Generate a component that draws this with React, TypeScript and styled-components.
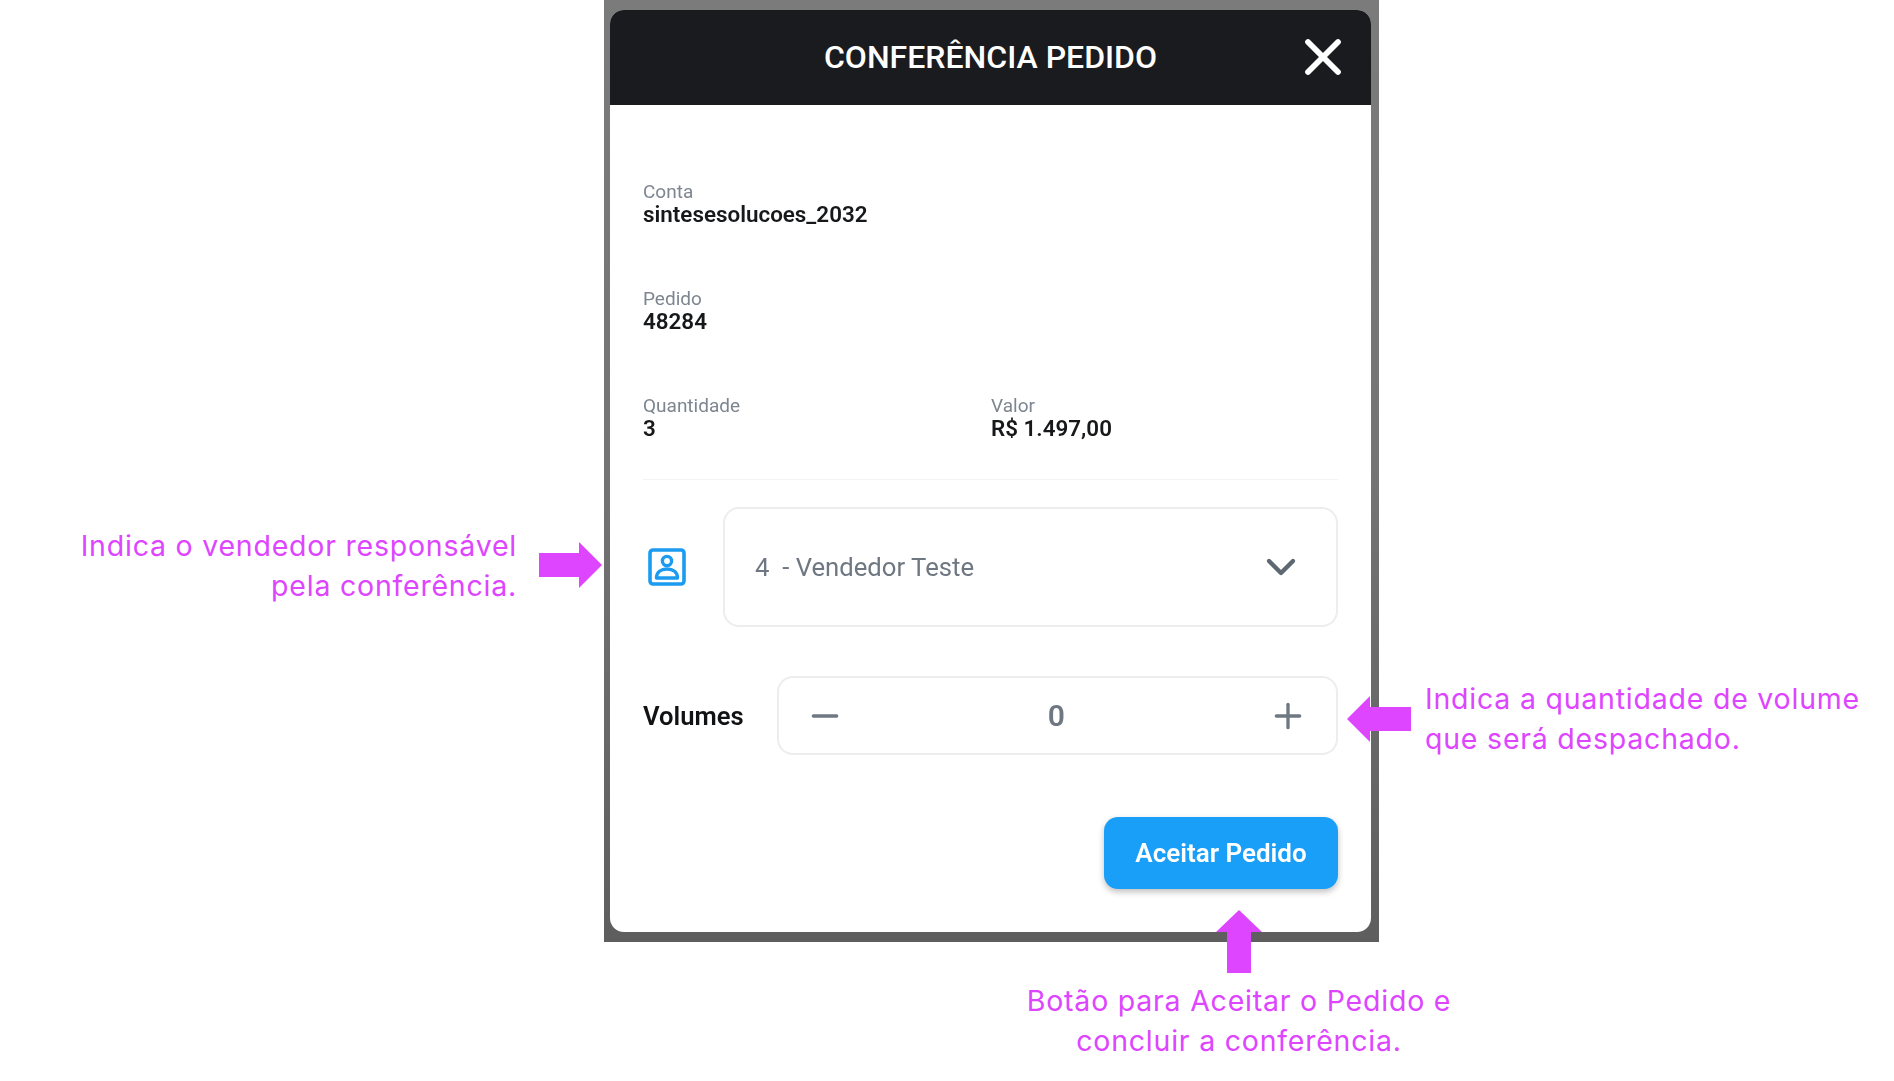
import styled, { createGlobalStyle } from "styled-components";
import { ChevronDown, Minus, Plus, X } from "lucide-react";

const GlobalStyle = createGlobalStyle`
  html, body {
    margin: 0;
    padding: 0;
    background: #fff;
  }
  body {
    font-family: Roboto, "Liberation Sans", sans-serif;
  }
`;

const Page = styled.div`
  width: 1894px;
  height: 1081px;
  overflow: hidden;
  display: grid;
  grid-template-columns: 604px 775px 515px;
  grid-template-rows: 942px 139px;
`;

const LeftNote = styled.div`
  display: flex;
  justify-content: flex-end;
  align-items: flex-start;
  padding-top: 526px;
  padding-right: 2px;
  gap: 22px;
`;

const RightNote = styled.div`
  display: flex;
  align-items: flex-start;
  padding-top: 679px;
`;

const BottomNote = styled.div`
  grid-column: 2;
  display: flex;
  flex-direction: column;
  align-items: center;
  margin-left: 500px;
  width: 270px;
  position: relative;
  z-index: 2;
`;

const NoteText = styled.div<{ align: "left" | "right" | "center" }>`
  font-family: Inter, "Noto Sans", sans-serif;
  font-size: 28.5px;
  letter-spacing: 0.78px;
  line-height: 40px;
  color: #dd45ff;
  text-align: ${(props) => props.align};
  white-space: nowrap;
`;

const ArrowRight = styled.svg`
  flex: none;
  margin-top: 16px;
  position: relative;
  z-index: 2;
`;

const ArrowLeft = styled.svg`
  flex: none;
  margin-left: -32px;
  margin-right: 14px;
  margin-top: 17px;
  position: relative;
  z-index: 2;
`;

const ArrowUp = styled.svg`
  flex: none;
  margin-top: -32px;
  margin-bottom: 8px;
`;

const Frame = styled.div`
  background: linear-gradient(180deg, #7b7b7b 0%, #747474 50%, #5e5e5e 100%);
  padding: 10px 8px 10px 6px;
  box-sizing: border-box;
  height: 942px;
`;

const Card = styled.div`
  height: 100%;
  background: #fff;
  border-radius: 14px;
  overflow: hidden;
  display: flex;
  flex-direction: column;
  filter: blur(0.4px);
`;

const Header = styled.div`
  height: 95px;
  flex: none;
  background: #1a1b1e;
  color: #fff;
  display: flex;
  align-items: center;
  justify-content: center;
  position: relative;
`;

const Title = styled.h1`
  margin: 0 0 2px;
  font-size: 32px;
  font-weight: 500;
`;

const CloseButton = styled.div`
  position: absolute;
  right: 18px;
  top: 17px;
  display: flex;
  color: #fff;
`;

const Body = styled.div`
  flex: 1;
  display: flex;
  flex-direction: column;
  padding: 75px 33px 0;
`;

const InfoRow = styled.div`
  display: grid;
  grid-template-columns: 348px 1fr;
  height: 107px;
`;

const Info = styled.div`
  display: flex;
  flex-direction: column;
`;

const Label = styled.span`
  font-size: 19px;
  line-height: 23px;
  color: #7d8690;
`;

const Value = styled.span`
  font-size: 22.4px;
  line-height: 23px;
  font-weight: 600;
  color: #17181a;
`;

const Divider = styled.div`
  height: 1px;
  background: #f2f3f4;
  margin-top: -22px;
`;

const SellerRow = styled.div`
  display: flex;
  align-items: center;
  margin-top: 27px;
  gap: 37px;
`;

const SellerIcon = styled.svg`
  flex: none;
  margin-left: 5px;
`;

const Select = styled.div`
  flex: 1;
  height: 120px;
  box-sizing: border-box;
  border: 2px solid #eceded;
  border-radius: 16px;
  padding: 0 31px 0 30px;
  display: flex;
  align-items: center;
  justify-content: space-between;
  font-size: 25.7px;
  color: #6f7882;
`;

const VolumesRow = styled.div`
  display: flex;
  align-items: center;
  margin-top: 49px;
  gap: 33px;
`;

const VolumesLabel = styled.span`
  font-size: 25.6px;
  font-weight: 600;
  color: #111214;
`;

const Stepper = styled.div`
  flex: 1;
  height: 79px;
  box-sizing: border-box;
  border: 2px solid #eceded;
  border-radius: 16px;
  padding: 0 28px 0 26px;
  display: flex;
  align-items: center;
  justify-content: space-between;
  color: #6f7882;
`;

const StepperValue = styled.span`
  font-size: 30px;
  font-weight: 600;
  color: #6f7882;
`;

const Actions = styled.div`
  display: flex;
  justify-content: flex-end;
  margin-top: 62px;
`;

const AcceptButton = styled.button`
  width: 234px;
  height: 72px;
  border: 0;
  border-radius: 14px;
  background: #1a9ff8;
  color: #fff;
  font-family: inherit;
  font-size: 26px;
  font-weight: 600;
  box-shadow: 0 3px 6px rgba(0, 0, 0, 0.25);
`;

const ARROW = "#dd45ff";

export default function App() {
  return (
    <Page>
      <GlobalStyle />
      <LeftNote>
        <NoteText align="right">
          Indica o vendedor responsável
          <br />
          pela conferência.
        </NoteText>
        <ArrowRight width="63" height="46" viewBox="0 0 63 46">
          <path d="M0 11H40V0L63 23L40 46V35H0Z" fill={ARROW} />
        </ArrowRight>
      </LeftNote>
      <Frame>
        <Card>
          <Header>
            <Title>CONFERÊNCIA PEDIDO</Title>
            <CloseButton>
              <X size={60} strokeWidth={2.3} />
            </CloseButton>
          </Header>
          <Body>
            <InfoRow>
              <Info>
                <Label>Conta</Label>
                <Value>sintesesolucoes_2032</Value>
              </Info>
            </InfoRow>
            <InfoRow>
              <Info>
                <Label>Pedido</Label>
                <Value>48284</Value>
              </Info>
            </InfoRow>
            <InfoRow>
              <Info>
                <Label>Quantidade</Label>
                <Value>3</Value>
              </Info>
              <Info>
                <Label>Valor</Label>
                <Value>R$ 1.497,00</Value>
              </Info>
            </InfoRow>
            <Divider />
            <SellerRow>
              <SellerIcon width="38" height="38" viewBox="0 0 38 38" fill="none">
                <rect x="2" y="2" width="34" height="34" rx="3" stroke="#1c9cf0" strokeWidth="3.6" />
                <circle cx="19" cy="13" r="4.6" stroke="#1c9cf0" strokeWidth="3.4" />
                <path d="M8.5 30c0-6 4.5-9 10.500-9s10.500 3 10.500 9z" stroke="#1c9cf0" strokeWidth="3.4" strokeLinejoin="round" />
              </SellerIcon>
              <Select>
                <span>4 &nbsp;- Vendedor Teste</span>
                <ChevronDown size={48} strokeWidth={2.2} color="#5e6873" />
              </Select>
            </SellerRow>
            <VolumesRow>
              <VolumesLabel>Volumes</VolumesLabel>
              <Stepper>
                <Minus size={40} strokeWidth={2} />
                <StepperValue>0</StepperValue>
                <Plus size={40} strokeWidth={2} />
              </Stepper>
            </VolumesRow>
            <Actions>
              <AcceptButton>Aceitar Pedido</AcceptButton>
            </Actions>
          </Body>
        </Card>
      </Frame>
      <RightNote>
        <ArrowLeft width="64" height="46" viewBox="0 0 64 46">
          <path d="M64 11H23V0L0 23L23 46V35H64Z" fill={ARROW} />
        </ArrowLeft>
        <NoteText align="left">
          Indica a quantidade de volume
          <br />
          que será despachado.
        </NoteText>
      </RightNote>
      <BottomNote>
        <ArrowUp width="46" height="63" viewBox="0 0 46 63">
          <path d="M11 63V22H0L23 0L46 22H35V63Z" fill={ARROW} />
        </ArrowUp>
        <NoteText align="center">
          Botão para Aceitar o Pedido e
          <br />
          concluir a conferência.
        </NoteText>
      </BottomNote>
    </Page>
  );
}
